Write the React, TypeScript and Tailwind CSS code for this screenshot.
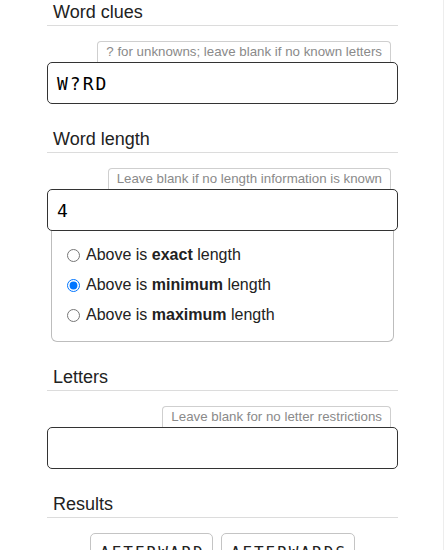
import React from 'react'

const sans = { fontFamily: '"Liberation Sans", Arial, sans-serif' }
const mono = { fontFamily: '"DejaVu Sans Mono", "Liberation Mono", monospace' }

const Heading: React.FC<{ title: string }> = ({ title }) => (
  <h2 className="pl-[6px] text-[18px] leading-[24px] pb-px border-b border-[#dcdcdc] text-[#222]">
    {title}
  </h2>
)

const Hint: React.FC<{ text: string }> = ({ text }) => (
  <div className="flex justify-end mt-[15px] mr-[7px]">
    <div className="h-[21px] px-[8px] border border-b-0 border-[#cfcfcf] rounded-t-[4px] text-[13.3px] leading-[20px] text-[#8a8a8a] bg-white">
      {text}
    </div>
  </div>
)

const Field: React.FC<{ value: string }> = ({ value }) => (
  <div
    className="h-[42px] border border-[#333] rounded-[5px] px-[9px] flex items-center text-[18px] tracking-[2px] text-black"
    style={mono}
  >
    {value}
  </div>
)

const options = [
  { key: 'exact', label: 'exact' },
  { key: 'min', label: 'minimum' },
  { key: 'max', label: 'maximum' },
]

export default function App() {
  return (
    <div className="w-[444px] min-h-[550px] border-r border-[#ededed] bg-white" style={sans}>
      <div className="mx-[47px] w-[351px]">
        {/* Word clues */}
        <section>
          <Heading title="Word clues" />
          <Hint text="? for unknowns; leave blank if no known letters" />
          <Field value="W?RD" />
        </section>

        {/* Word length */}
        <section className="mt-[23px]">
          <Heading title="Word length" />
          <Hint text="Leave blank if no length information is known" />
          <Field value="4" />
          <div className="mx-[4px] border border-t-0 border-[#bdbdbd] rounded-b-[6px] pt-[9px] pb-[11px] pl-[15px]">
            {options.map((o) => (
              <label key={o.key} className="flex items-center h-[30px] text-[16px] text-[#222]">
                <input
                  type="radio"
                  name="len"
                  defaultChecked={o.key === 'min'}
                  className="w-[13px] h-[13px] m-0 mr-[6px]"
                />
                <span>
                  Above is <b>{o.label}</b> length
                </span>
              </label>
            ))}
          </div>
        </section>

        {/* Letters */}
        <section className="mt-[23px]">
          <Heading title="Letters" />
          <Hint text="Leave blank for no letter restrictions" />
          <Field value="" />
        </section>

        {/* Results */}
        <section className="mt-[23px]">
          <Heading title="Results" />
          <div className="flex justify-center gap-[8px] mt-[15px]">
            {['AFTERWARD', 'AFTERWARDS'].map((w) => (
              <div
                key={w}
                className="border border-[#c4c4c4] rounded-[5px] pl-[9px] pr-[7px] h-[40px] flex items-center text-[16px] tracking-[2px] text-[#222]"
                style={mono}
              >
                {w}
              </div>
            ))}
          </div>
        </section>
      </div>
    </div>
  )
}
